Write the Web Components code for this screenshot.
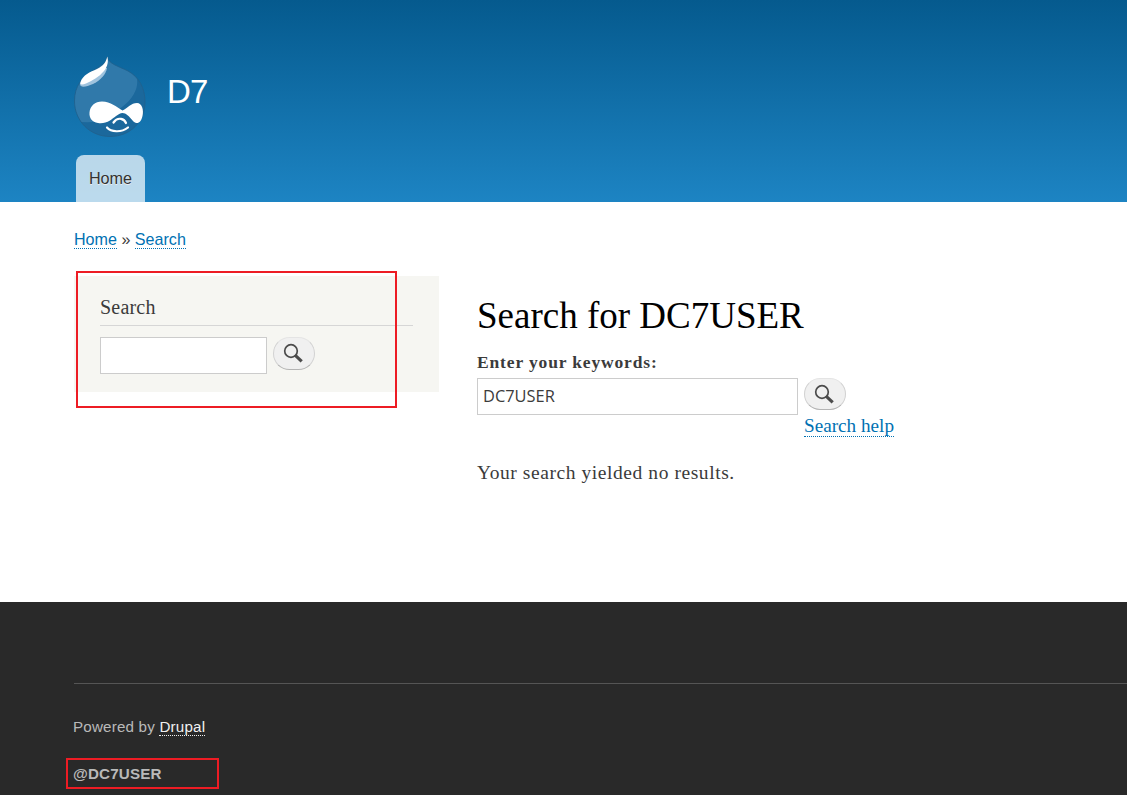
<!DOCTYPE html>
<html lang="en">
<head>
<meta charset="utf-8">
<title>Search | D7</title>
<style>
  body {
    margin: 0;
    height: 795px;
    overflow: hidden;
    background: #fff;
    color: #3b3b3b;
    font-family: Georgia, "Liberation Serif", serif;
  }
</style>
</head>
<body>
<site-page>
  <site-header slot="header" name="D7"></site-header>
  <bread-crumb slot="breadcrumb"></bread-crumb>
  <side-block slot="sidebar" heading="Search">
    <search-form></search-form>
  </side-block>
  <search-results slot="content"></search-results>
  <site-footer slot="footer"></site-footer>
</site-page>

<script>
class SitePage extends HTMLElement {
  constructor() {
    super();
    this.shadow = this.attachShadow({ mode: "open" });
  }

  connectedCallback() {
    this.shadow.innerHTML = `
      <style>
      :host {
        display: flex;
        flex-direction: column;
        height: 795px;
      }
      main {
        height: 400px;
        padding-left: 74px;
        box-sizing: border-box;
      }
      .columns {
        display: grid;
        grid-template-columns: 365px 1fr;
        column-gap: 38px;
        align-items: start;
      }
      </style>
      <slot name="header"></slot>
      <main>
        <slot name="breadcrumb"></slot>
        <div class="columns">
          <slot name="sidebar"></slot>
          <slot name="content"></slot>
        </div>
      </main>
      <slot name="footer"></slot>
    `;
  }
}

class SiteHeader extends HTMLElement {
  constructor() {
    super();
    this.shadow = this.attachShadow({ mode: "open" });
  }

  connectedCallback() {
    this.shadow.innerHTML = `
      <style>
      :host {
        display: flex;
        flex-direction: column;
        justify-content: space-between;
        align-items: flex-start;
        box-sizing: border-box;
        height: 202px;
        padding: 56px 0 0 73px;
        background: linear-gradient(#055a8e, #1d84c3);
        font-family: Arial, "Liberation Sans", sans-serif;
      }
      .brand {
        display: flex;
        gap: 20px;
      }
      .name {
        padding-top: 17px;
        color: #fff;
        font-size: 33px;
        letter-spacing: -0.8px;
        line-height: 38px;
      }
      .tab {
        width: 69px;
        height: 47px;
        margin-left: 3px;
        border-radius: 8px 8px 0 0;
        background: rgba(255, 255, 255, 0.7);
        color: #333;
        font-size: 16.2px;
        line-height: 46px;
        text-align: center;
        text-decoration: none;
        text-shadow: 0 1px #eee;
      }
      </style>
      <div class="brand">
        <drop-logo></drop-logo>
        <span class="name">${this.getAttribute("name")}</span>
      </div>
      <a class="tab">Home</a>
    `;
  }
}

class DropLogo extends HTMLElement {
  constructor() {
    super();
    this.shadow = this.attachShadow({ mode: "open" });
  }

  connectedCallback() {
    this.shadow.innerHTML = `
      <style>
      :host {
        display: block;
        width: 74px;
        height: 82px;
      }
      svg {
        display: block;
      }
      </style>
      <svg width="74" height="82" viewBox="0 0 74 82">
        <defs>
          <clipPath id="drop">
            <path d="M34 1C36 8 45 10 55 15C66 21 72 32 72 46C72 66 57 80.500 37 80.500C17 80.500 1.500 65 1.500 45C1.500 30 9 21 21 14C29 9 33 7 34 1Z"/>
          </clipPath>
        </defs>
        <g clip-path="url(#drop)">
          <rect width="74" height="82" fill="#3079aa"/>
          <path d="M62 17C67 26 64 40 49 51L35 62C25 67 12 67 0 65V82H74V17Z" fill="#1b689c"/>
        </g>
        <path d="M34 1C36 8 45 10 55 15C66 21 72 32 72 46C72 66 57 80.500 37 80.500C17 80.500 1.500 65 1.500 45C1.500 30 9 21 21 14C29 9 33 7 34 1Z" fill="none" stroke="#1f608c" stroke-width=".8"/>
        <path d="M7 28C7 32 13 31 20 28C28 24 33 18 34 12L30 12L9 25Z" fill="#9fc3de"/>
        <path d="M34.300 0.500C35.500 5 35 10 31 15C26 21 19 25 13 27.500C9 29 6.500 29 7.500 26C10 19 17 16 24 13C31 9.500 33 6 34.300 0.500Z" fill="#fff"/>
        <path d="M29 45.500C38 45.500 43 51 49.500 54.500C55 52 58 47 64 47C69 47 71 54 69.500 60C68 67 64 69 60 65C56 60 53 57 49.500 57C45 57.500 41 62 37 64.500C33 67 29 67.500 25 67C19 66 16 62 16.500 56.500C17 50 22 45.500 29 45.500Z" fill="#fff"/>
        <path d="M40.500 66.500C43 63 46 62.500 48 62.900C50 63.300 52 64.500 53 67" fill="none" stroke="#fff" stroke-width="2.200" stroke-linecap="round"/>
        <path d="M34 71.500C38 76 48 77 55 71.500" fill="none" stroke="#fff" stroke-width="2.200" stroke-linecap="round"/>
      </svg>
    `;
  }
}

class BreadCrumb extends HTMLElement {
  constructor() {
    super();
    this.shadow = this.attachShadow({ mode: "open" });
  }

  connectedCallback() {
    this.shadow.innerHTML = `
      <style>
      :host {
        display: block;
        height: 46px;
        padding-top: 28px;
        font-family: Arial, "Liberation Sans", sans-serif;
        font-size: 16.1px;
        line-height: 18px;
      }
      a {
        display: inline-block;
        color: #0071b3;
        border-bottom: 1px dotted;
      }
      </style>
      <a>Home</a> » <a>Search</a>
    `;
  }
}

class SideBlock extends HTMLElement {
  constructor() {
    super();
    this.shadow = this.attachShadow({ mode: "open" });
  }

  connectedCallback() {
    this.shadow.innerHTML = `
      <style>
      :host {
        display: block;
        position: relative;
        box-sizing: border-box;
        width: 365px;
        height: 116px;
        padding: 20px 26px 0;
        background: #f6f6f2;
      }
      h2 {
        margin: 0 0 11px;
        height: 29px;
        border-bottom: 1px solid #d6d6d6;
        font-size: 20px;
        font-weight: normal;
        letter-spacing: 0.2px;
        line-height: 22px;
      }
      .mark {
        position: absolute;
        left: 2px;
        top: -5px;
        width: 317px;
        height: 133px;
        border: 2px solid #ed1c24;
      }
      </style>
      <h2>${this.getAttribute("heading")}</h2>
      <slot></slot>
      <div class="mark"></div>
    `;
  }
}

class SearchForm extends HTMLElement {
  constructor() {
    super();
    this.shadow = this.attachShadow({ mode: "open" });
  }

  connectedCallback() {
    this.shadow.innerHTML = `
      <style>
      :host {
        display: flex;
        align-items: flex-start;
        gap: 6px;
      }
      .field {
        box-sizing: border-box;
        width: var(--field-width, 167px);
        height: 37px;
        padding-left: 5px;
        border: 1px solid #ccc;
        background: #fff;
        font-family: "Segoe UI", "Open Sans", sans-serif;
        font-size: 16.4px;
        line-height: 34px;
      }
      .button {
        box-sizing: border-box;
        width: 42px;
        height: var(--button-height, 33px);
        border: 1px solid;
        border-color: #e4e4e4 #d2d2d2 #b4b4b4;
        border-radius: 17px;
        background: #f0f0f0;
      }
      svg {
        display: block;
        margin: 5px 0 0 9px;
      }
      </style>
      <div class="field">${this.getAttribute("value") || ""}</div>
      <div>
        <div class="button">
          <svg width="22" height="21" viewBox="0 0 22 21" fill="none" stroke="#4b4b4b">
            <circle cx="8" cy="8" r="6.300" stroke-width="1.700"/>
            <path d="M12.300 12.300L18.700 18.300" stroke-width="3.200"/>
          </svg>
        </div>
        <slot></slot>
      </div>
    `;
  }
}

class SearchResults extends HTMLElement {
  constructor() {
    super();
    this.shadow = this.attachShadow({ mode: "open" });
  }

  connectedCallback() {
    this.shadow.innerHTML = `
      <style>
      :host {
        display: block;
        padding-top: 19px;
      }
      h1 {
        margin: 0;
        color: #000;
        font-size: 37px;
        font-weight: normal;
        line-height: 42px;
      }
      label {
        display: block;
        margin: 15px 0 6px;
        font-size: 17.5px;
        font-weight: bold;
        letter-spacing: 0.85px;
        line-height: 20px;
      }
      search-form {
        --field-width: 321px;
        --button-height: 32px;
      }
      a {
        display: block;
        height: 20px;
        margin-top: 6px;
        border-bottom: 1px dotted;
        color: #0071b3;
        font-size: 19.2px;
        line-height: 20px;
      }
      p {
        margin: 25px 0 0;
        font-size: 19.5px;
        letter-spacing: 0.57px;
        line-height: 22px;
      }
      </style>
      <h1>Search for DC7USER</h1>
      <label>Enter your keywords:</label>
      <search-form value="DC7USER"><a>Search help</a></search-form>
      <p>Your search yielded no results.</p>
    `;
  }
}

class SiteFooter extends HTMLElement {
  constructor() {
    super();
    this.shadow = this.attachShadow({ mode: "open" });
  }

  connectedCallback() {
    this.shadow.innerHTML = `
      <style>
      :host {
        display: block;
        box-sizing: border-box;
        height: 193px;
        padding: 81px 0 0 73px;
        background: #292929;
        color: #b9b9b9;
        font-family: Arial, "Liberation Sans", sans-serif;
        font-size: 15.2px;
        line-height: 17px;
      }
      .powered {
        margin-left: 1px;
        padding-top: 34px;
        border-top: 1px solid #555;
        letter-spacing: 0.18px;
      }
      .powered span {
        margin-left: -1px;
      }
      a {
        display: inline-block;
        border-bottom: 1px dotted;
        color: #f0f0f0;
      }
      .owner {
        position: relative;
        width: 146px;
        margin-top: 29px;
        font-weight: bold;
        letter-spacing: 0.15px;
      }
      .mark {
        position: absolute;
        left: -7px;
        top: -7px;
        width: 149px;
        height: 27px;
        border: 2px solid #ed1c24;
      }
      </style>
      <div class="powered"><span>Powered by <a>Drupal</a></span></div>
      <div class="owner">@DC7USER<div class="mark"></div></div>
    `;
  }
}

customElements.define("site-page", SitePage);
customElements.define("site-header", SiteHeader);
customElements.define("drop-logo", DropLogo);
customElements.define("bread-crumb", BreadCrumb);
customElements.define("side-block", SideBlock);
customElements.define("search-form", SearchForm);
customElements.define("search-results", SearchResults);
customElements.define("site-footer", SiteFooter);
</script>
</body>
</html>
